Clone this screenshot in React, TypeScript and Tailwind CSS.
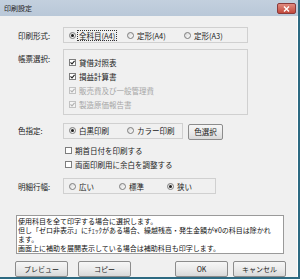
import React from "react";

const font = { fontFamily: '"Noto Sans CJK JP", "Noto Sans", sans-serif' };

const Radio: React.FC<{ checked?: boolean; label: string; focus?: boolean; className?: string }> = ({
  checked,
  label,
  focus,
  className = "",
}) => (
  <div className={`flex items-center ${className}`}>
    <span className="flex h-[7px] w-[7px] items-center justify-center rounded-full border border-[#7d7d7d] bg-gradient-to-br from-[#d6d6d6] to-white">
      {checked && <span className="h-[3px] w-[3px] rounded-full bg-[#1e1e1e]" />}
    </span>
    <span
      className={`ml-[2px] px-[1px] leading-[9px] ${focus ? "outline outline-1 outline-dotted outline-[#333]" : ""}`}
    >
      {label}
    </span>
  </div>
);

const Check: React.FC<{ checked?: boolean; label: string; disabled?: boolean }> = ({
  checked,
  label,
  disabled,
}) => (
  <div className={`flex h-[14px] items-center ${disabled ? "text-[#a6a6a6]" : "text-[#1a1a1a]"}`}>
    <span
      className={`flex h-[7px] w-[7px] items-center justify-center border ${
        disabled ? "border-[#c2c2c2] bg-[#f4f4f4]" : "border-[#7d7d7d] bg-white"
      }`}
    >
      {checked && (
        <svg width="5" height="5" viewBox="0 0 5 5">
          <path
            d="M0.5 2.4 L2 3.9 L4.6 0.8"
            fill="none"
            stroke={disabled ? "#b0b0b0" : "#222"}
            strokeWidth="1.1"
          />
        </svg>
      )}
    </span>
    <span className="ml-[3px]">{label}</span>
  </div>
);

const Btn: React.FC<{ label: string; className?: string }> = ({ label, className = "" }) => (
  <div
    className={`flex h-[16px] items-center justify-center rounded-[2px] border border-[#8c8c8c] bg-gradient-to-b from-[#f6f6f6] via-[#ebebeb] to-[#d9d9d9] text-[#1a1a1a] ${className}`}
  >
    {label}
  </div>
);

export default function App() {
  return (
    <div
      className="flex h-[279px] w-[300px] flex-col overflow-hidden border-r-2 border-b-2 border-[#2d6a82] bg-[#f0f0f0] text-[7.5px] leading-[9px] text-[#1a1a1a]"
      style={font}
    >
      {/* Title bar */}
      <div className="relative flex h-[16px] shrink-0 items-center bg-gradient-to-b from-[#c3d0de] to-[#b9c8d8] pl-[4px] text-[7px] text-[#222]">
        印刷設定
        <div className="absolute right-[2px] top-[3px] flex h-[11px] w-[19px] items-center justify-center rounded-[2px] border border-[#8a3a3a] bg-gradient-to-b from-[#e08a7f] to-[#c2483c]">
          <svg width="7" height="6" viewBox="0 0 7 6">
            <path d="M1 0.5 L6 5.5 M6 0.5 L1 5.5" stroke="white" strokeWidth="1.4" />
          </svg>
        </div>
      </div>

      <div className="flex flex-1 flex-col border-r border-white pl-[16px]">
        {/* 印刷形式 */}
        <div className="mt-[11px] flex h-[16px] items-center">
          <div className="w-[47px] pl-[2px]">印刷形式:</div>
          <div className="flex h-[16px] w-[185px] items-center border border-[#d0d0d0] pl-[5px]">
            <Radio checked focus label="全科目(A4)" className="w-[58px]" />
            <Radio label="定形(A4)" className="w-[57px]" />
            <Radio label="定形(A3)" />
          </div>
        </div>

        {/* 帳票選択 */}
        <div className="mt-[6px] flex items-start">
          <div className="mt-[5px] w-[47px] pl-[2px]">帳票選択:</div>
          <div className="flex h-[66px] w-[185px] flex-col border border-[#d0d0d0] pl-[5px] pt-[5px]">
            <Check checked label="貸借対照表" />
            <Check checked label="損益計算書" />
            <Check checked disabled label="販売費及び一般管理費" />
            <Check checked disabled label="製造原価報告書" />
          </div>
        </div>

        {/* 色指定 */}
        <div className="mt-[7px] flex h-[17px] items-center">
          <div className="w-[47px] pl-[2px]">色指定:</div>
          <div className="flex h-[16px] w-[120px] items-center border border-[#d0d0d0] pl-[5px]">
            <Radio checked label="白黒印刷" className="w-[58px]" />
            <Radio label="カラー印刷" />
          </div>
          <Btn label="色選択" className="ml-[5px] mt-[2px] w-[35px]" />
        </div>

        {/* checkboxes */}
        <div className="ml-[49px] mt-[4px] flex flex-col">
          <Check label="期首日付を印刷する" />
          <Check label="両面印刷用に余白を調整する" />
        </div>

        {/* 明細行幅 */}
        <div className="mt-[7px] flex h-[16px] items-center">
          <div className="w-[47px] pl-[2px]">明細行幅:</div>
          <div className="flex h-[16px] w-[153px] items-center border border-[#d0d0d0] pl-[5px]">
            <Radio label="広い" className="w-[50px]" />
            <Radio label="標準" className="w-[48px]" />
            <Radio checked label="狭い" />
          </div>
        </div>

        {/* description */}
        <div className="mt-[21px] h-[39px] w-[268px] border border-[#9a9a9a] bg-white pl-px pt-[1px] text-[7px] leading-[9px] text-[#111]">
          使用科目を全て印字する場合に選択します。
          <br />
          但し「ゼロ非表示」にﾁｪｯｸがある場合、繰越残高・発生金額が¥0の科目は除かれ
          <br />
          ます。
          <br />
          画面上に補助を展開表示している場合は補助科目も印字します。
        </div>

        {/* buttons */}
        <div className="-ml-px mt-[7px] flex text-[7px]">
          <Btn label="プレビュー" className="w-[53px]" />
          <Btn label="コピー" className="ml-[10px] w-[53px]" />
          <Btn label="OK" className="ml-[44px] w-[53px]" />
          <Btn label="キャンセル" className="ml-[5px] w-[53px]" />
        </div>
      </div>
    </div>
  );
}
